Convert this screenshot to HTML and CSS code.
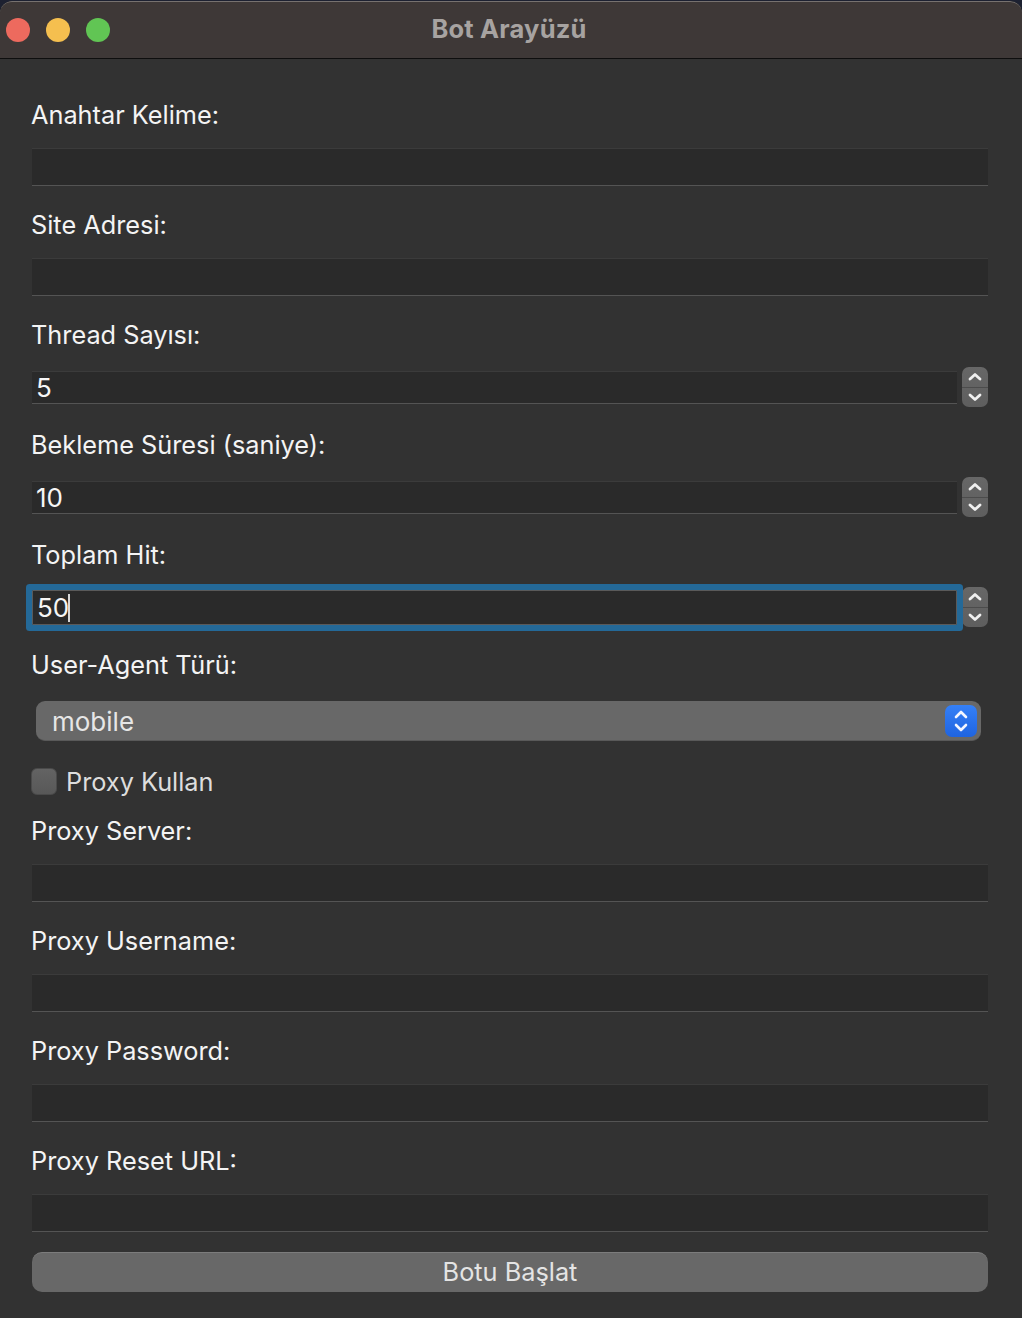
FILE: index.html
```html
<!DOCTYPE html>
<html lang="tr">
<head>
    <meta charset="UTF-8">
    <title>Bot Arayüzü</title>
    <link rel="stylesheet" href="styles.css">
</head>
<body>

<div class="window">

    <!-- Başlık çubuğu -->
    <div class="titlebar">
        <div class="lights">
            <span class="light red"></span>
            <span class="light yellow"></span>
            <span class="light green"></span>
        </div>
        <div class="title">Bot Arayüzü</div>
    </div>

    <!-- Form -->
    <form class="content" onsubmit="return false;">

        <div class="field">
            <label class="field-label" for="anahtar">Anahtar Kelime:</label>
            <input class="text-input" type="text" id="anahtar">
        </div>

        <div class="field">
            <label class="field-label" for="site">Site Adresi:</label>
            <input class="text-input" type="text" id="site">
        </div>

        <div class="field spin-field">
            <label class="field-label" for="thread">Thread Sayısı:</label>
            <div class="spin-row">
                <input class="spin-input" type="number" id="thread" value="5">
                <div class="stepper">
                    <span class="step up"><svg viewBox="0 0 16 9"><path d="M3 7 8 2.5l5 4.5"/></svg></span>
                    <span class="step down"><svg viewBox="0 0 16 9"><path d="M3 2 8 6.5 13 2"/></svg></span>
                </div>
            </div>
        </div>

        <div class="field spin-field">
            <label class="field-label" for="bekleme">Bekleme Süresi (saniye):</label>
            <div class="spin-row">
                <input class="spin-input" type="number" id="bekleme" value="10">
                <div class="stepper">
                    <span class="step up"><svg viewBox="0 0 16 9"><path d="M3 7 8 2.5l5 4.5"/></svg></span>
                    <span class="step down"><svg viewBox="0 0 16 9"><path d="M3 2 8 6.5 13 2"/></svg></span>
                </div>
            </div>
        </div>

        <div class="field spin-field">
            <label class="field-label" for="hit">Toplam Hit:</label>
            <div class="spin-row">
                <div class="spin-wrap">
                    <input class="spin-input focused" type="number" id="hit" value="50">
                    <span class="caret"></span>
                </div>
                <div class="stepper">
                    <span class="step up"><svg viewBox="0 0 16 9"><path d="M3 7 8 2.5l5 4.5"/></svg></span>
                    <span class="step down"><svg viewBox="0 0 16 9"><path d="M3 2 8 6.5 13 2"/></svg></span>
                </div>
            </div>
        </div>

        <div class="field select-field">
            <label class="field-label" for="ua">User-Agent Türü:</label>
            <div class="select-box">
                <select id="ua">
                    <option value="mobile">mobile</option>
                    <option value="desktop">desktop</option>
                </select>
                <span class="select-btn"><svg viewBox="0 0 16 26"><path d="M3 9 8 4l5 5M3 17l5 5 5-5"/></svg></span>
            </div>
        </div>

        <label class="check-row">
            <input type="checkbox" id="proxy">
            <span>Proxy Kullan</span>
        </label>

        <div class="field">
            <label class="field-label" for="pserver">Proxy Server:</label>
            <input class="text-input" type="text" id="pserver">
        </div>

        <div class="field">
            <label class="field-label" for="puser">Proxy Username:</label>
            <input class="text-input" type="text" id="puser">
        </div>

        <div class="field">
            <label class="field-label" for="ppass">Proxy Password:</label>
            <input class="text-input" type="password" id="ppass">
        </div>

        <div class="field last">
            <label class="field-label" for="preset">Proxy Reset URL:</label>
            <input class="text-input" type="text" id="preset">
        </div>

        <button class="start-btn" type="button">Botu Başlat</button>

    </form>
</div>

</body>
</html>
```

FILE: styles.css
```css
html, body { margin: 0; padding: 0; }
body { background: #1d2131; font-family: Inter, "Noto Sans", sans-serif; color: #f2f2f2; }
.window { margin-top: 1px; background: #323232; border-radius: 12px 12px 0 0; overflow: hidden; min-height: 1317px; }

/* Başlık çubuğu */
.titlebar { position: relative; height: 56px; background: #3e3837; border-top: 1px solid #76716f; border-bottom: 1px solid #0e0e0e; border-radius: 12px 12px 0 0; display: flex; align-items: center; justify-content: center; }
.lights { position: absolute; left: 6px; top: 16px; display: flex; gap: 16px; }
.light { width: 24px; height: 24px; border-radius: 50%; }
.light.red { background: #ed6a5e; }
.light.yellow { background: #f5bf4f; }
.light.green { background: #61c554; }
.title { font-size: 25.5px; font-weight: 700; letter-spacing: 0.2px; color: #a7a3a1; margin: 0 0 4px -4px; }

/* Form alanları */
.content { padding: 39px 34px 30px 31px; display: flex; flex-direction: column; }
.field { display: flex; flex-direction: column; gap: 18px; margin-bottom: 22px; }
.field.last { margin-bottom: 20px; }
.field-label { font-size: 25.3px; line-height: 30px; padding-top: 2px; color: #f4f4f4; }
.text-input { height: 38px; margin-left: 1px; box-sizing: border-box; background: #2a2a2a; border: none; border-top: 1px solid #3b3b3b; border-bottom: 1px solid #545454; color: #f2f2f2; font: inherit; font-size: 26px; padding: 0 4px; outline: none; }

.spin-field { gap: 17px; margin-bottom: 21px; }
.spin-row { display: flex; align-items: center; height: 40px; gap: 5px; margin-left: 1px; }
.spin-wrap { position: relative; flex: 1; display: flex; }
.spin-input { flex: 1; height: 33px; box-sizing: border-box; background: #2a2a2a; border: none; border-top: 1px solid #3b3b3b; border-bottom: 1px solid #545454; color: #f6f6f6; font: inherit; font-size: 26px; padding: 0 4px; outline: none; -moz-appearance: textfield; }
.spin-input::-webkit-inner-spin-button, .spin-input::-webkit-outer-spin-button { -webkit-appearance: none; margin: 0; }
.spin-input.focused { height: 35px; border: 1px solid #5a5a5a; box-shadow: 0 0 0 6px #246998; border-radius: 1px; position: relative; z-index: 1; }
.caret { position: absolute; left: 36px; top: 4px; width: 2px; height: 28px; background: #d8d8d8; z-index: 2; }
.stepper { width: 26px; height: 40px; border-radius: 7px; background: linear-gradient(#676767, #5e5e5e); display: flex; flex-direction: column; overflow: hidden; }
.step { flex: 1; display: flex; align-items: center; justify-content: center; }
.step.up { border-bottom: 1px solid #4c4c4c; }
.step svg { width: 16px; height: 9px; fill: none; stroke: #f0f0f0; stroke-width: 2.8; stroke-linecap: round; stroke-linejoin: round; }

/* Açılır liste */
.select-field { gap: 21px; margin-bottom: 27px; }
.select-box { position: relative; height: 40px; margin: 0 7px 0 5px; }
.select-box select { width: 100%; height: 40px; -webkit-appearance: none; appearance: none; background: #686868; border: none; border-bottom: 1px solid #595959; border-radius: 9px; color: #e6e6e6; font: inherit; font-size: 26px; padding: 1px 0 0 16px; outline: none; }
.select-btn { position: absolute; right: 4px; top: 4px; width: 32px; height: 32px; border-radius: 7px; background: linear-gradient(#3580f7, #1f64e0); display: flex; align-items: center; justify-content: center; }
.select-btn svg { width: 16px; height: 26px; fill: none; stroke: #f4f6ff; stroke-width: 2.6; stroke-linecap: round; stroke-linejoin: round; }

/* Onay kutusu */
.check-row { display: flex; align-items: center; gap: 9px; height: 27px; margin-bottom: 19px; font-size: 25.3px; color: #dddddd; }
.check-row input { -webkit-appearance: none; appearance: none; margin: 0; width: 26px; height: 27px; border-radius: 6px; background: linear-gradient(#636363, #585858); border: 1px solid #4a4a4a; box-sizing: border-box; }

/* Başlat butonu */
.start-btn { height: 40px; margin-left: 1px; padding: 0 0 3px; background: #686868; border: none; border-top: 1px solid #7c7c7c; border-radius: 10px; color: #e4e4e4; font: inherit; font-size: 25.3px; cursor: pointer; }
```
